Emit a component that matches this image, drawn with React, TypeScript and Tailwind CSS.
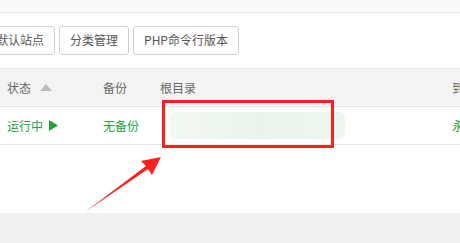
const BUTTONS = ["设置默认站点", "分类管理", "PHP命令行版本"];

function Button({ label }: { label: string }) {
  return (
    <button className="h-[29px] shrink-0 rounded-[3px] border border-[#d0d0d0] bg-white px-[10px] text-[12px] text-[#555]">
      {label}
    </button>
  );
}

export default function App() {
  return (
    <div
      className="relative h-[243px] w-[460px] overflow-hidden bg-white"
      style={{ fontFamily: '"Noto Sans CJK SC", "Noto Sans", sans-serif' }}
    >
      <div className="h-[13px] border-b border-[#e6e6e6] bg-[#f9f9f9]" />

      <div className="flex h-[55px] items-center pb-[1px]">
        <div className="ml-[-39px] flex shrink-0 gap-[4px]">
          {BUTTONS.map((b) => (
            <Button key={b} label={b} />
          ))}
        </div>
      </div>

      <div className="flex h-[39px] items-center border-y border-[#e3e3e3] bg-[#f4f4f4] text-[12px] text-[#666]">
        <div className="flex w-[103px] shrink-0 items-center pl-[7px]">
          <span>状态</span>
          <svg className="ml-[9px]" width="12" height="7" viewBox="0 0 12 7">
            <path d="M0 7 L6 0 L12 7 Z" fill="#bbb" />
          </svg>
        </div>
        <div className="w-[57px] shrink-0">备份</div>
        <div className="w-[292px] shrink-0">根目录</div>
        <div className="shrink-0 whitespace-nowrap">到期时间</div>
      </div>

      <div className="flex h-[38px] items-center border-b border-[#e6e6e6] text-[12px] text-[#20a53a]">
        <div className="flex w-[103px] shrink-0 items-center pl-[7px]">
          <span>运行中</span>
          <svg className="ml-[6px]" width="9" height="11" viewBox="0 0 9 11">
            <path d="M0 0 L9 5.5 L0 11 Z" fill="#20a53a" />
          </svg>
        </div>
        <div className="w-[57px] shrink-0">无备份</div>
        <div className="w-[292px] shrink-0">
          <div className="ml-[10px] h-[27px] w-[175px] rounded-[6px] bg-gradient-to-r from-[#f3f8f3] via-[#e9f3ec] to-[#eef6ef]" />
        </div>
        <div className="shrink-0 whitespace-nowrap">永久</div>
      </div>

      <div className="h-[68px]" />
      <div className="h-[30px] bg-[#f0f0f0]" />

      <div className="absolute left-[162px] top-[100px] h-[48px] w-[172px] border-[3px] border-[#ff1f1f]" />

      <svg className="absolute left-0 top-0" width="460" height="243" viewBox="0 0 460 243">
        <path d="M85 212 L146 166 L141 161 L161 157 L152 175 L148 169 Z" fill="#ff1f1f" />
      </svg>
    </div>
  );
}
